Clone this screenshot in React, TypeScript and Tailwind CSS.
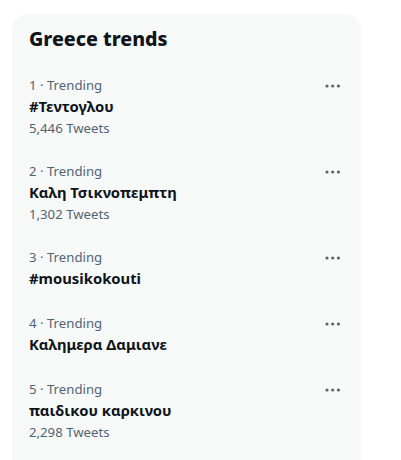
import React from 'react';

type Trend = {
  rank: number;
  name: string;
  tweets?: string;
};

const trends: Trend[] = [
  { rank: 1, name: '#Τεντογλου', tweets: '5,446 Tweets' },
  { rank: 2, name: 'Καλη Τσικνοπεμπτη', tweets: '1,302 Tweets' },
  { rank: 3, name: '#mousikokouti' },
  { rank: 4, name: 'Καλημερα Δαμιανε' },
  { rank: 5, name: 'παιδικου καρκινου', tweets: '2,298 Tweets' },
];

function MoreIcon() {
  return (
    <svg width="16" height="4" viewBox="0 0 16 4" className="text-[#536471]">
      <circle cx="2" cy="2" r="1.6" fill="currentColor" />
      <circle cx="7.7" cy="2" r="1.6" fill="currentColor" />
      <circle cx="13.4" cy="2" r="1.6" fill="currentColor" />
    </svg>
  );
}

function TrendRow({ trend }: { trend: Trend }) {
  return (
    <div className="flex justify-between px-[17px] py-3">
      <div className="flex flex-col">
        <span className="text-[13.2px] leading-[19px] text-[#536471]">{trend.rank} · Trending</span>
        <span className="text-[14.8px] leading-[23px] font-bold text-[#0f1419]">{trend.name}</span>
        {trend.tweets && (
          <span className="mt-px text-[13.2px] leading-[19px] text-[#536471]">{trend.tweets}</span>
        )}
      </div>
      <div className="h-[19px] flex items-center pr-[3px]">
        <MoreIcon />
      </div>
    </div>
  );
}

export default function App() {
  return (
    <div
      className="h-[460px] w-[401px] overflow-hidden bg-white pt-[14px] pl-[12px]"
      style={{ fontFamily: '"Noto Sans", "Open Sans", sans-serif' }}
    >
      {/* Trends card */}
      <div className="w-[349px] min-h-[460px] rounded-t-2xl bg-[#f7f9f9]">
        <div className="h-[50px] flex items-center px-[17px]">
          <h2 className="text-[19.6px] leading-6 font-extrabold text-[#0f1419]">Greece trends</h2>
        </div>
        {trends.map((t) => (
          <TrendRow key={t.rank} trend={t} />
        ))}
      </div>
    </div>
  );
}
